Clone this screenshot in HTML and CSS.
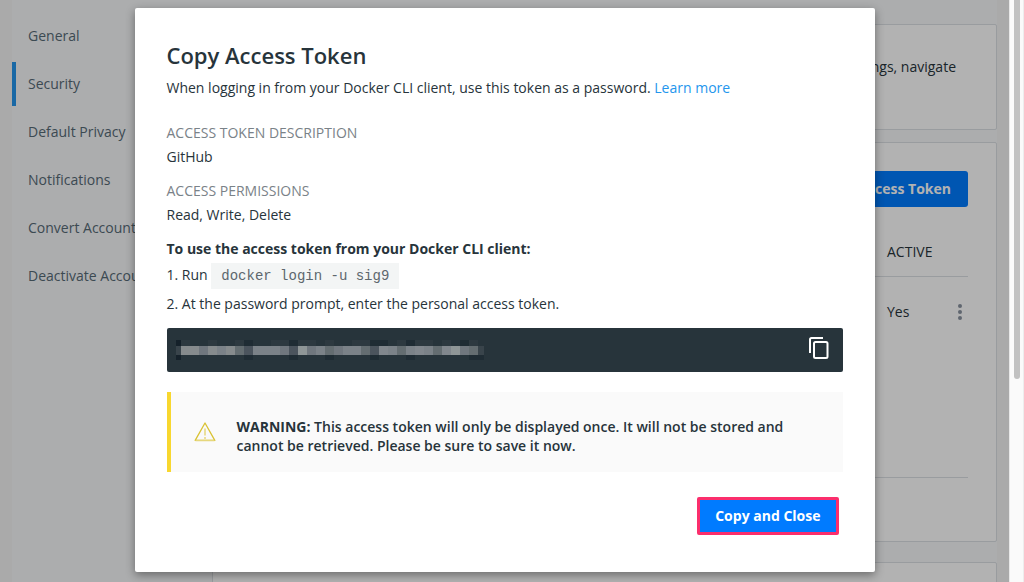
FILE: index.html
```html
<!DOCTYPE html>
<html lang="en">
<head>
<meta charset="utf-8">
<title>Copy Access Token</title>
<link rel="stylesheet" href="styles.css">
</head>
<body>
<div class="app">
  <div class="page">
    <nav class="sidebar">
      <a class="nav-item" href="#">General</a>
      <a class="nav-item active" href="#">Security</a>
      <a class="nav-item" href="#">Default Privacy</a>
      <a class="nav-item" href="#">Notifications</a>
      <a class="nav-item" href="#">Convert Account</a>
      <a class="nav-item" href="#">Deactivate Account</a>
    </nav>
    <main class="content">
      <section class="card card-intro"><p>settings, navigate</p></section>
      <section class="card card-tokens">
        <button class="btn new-token" type="button">New Access Token</button>
        <table class="tokens">
          <thead><tr><th></th><th class="col-active">ACTIVE</th></tr></thead>
          <tbody><tr><td></td><td class="col-active"><div class="row-end">Yes
            <button class="more" type="button" aria-label="More">
              <svg width="6" height="16" viewBox="0 0 6 16"><circle cx="3" cy="2" r="2"/><circle cx="3" cy="8" r="2"/><circle cx="3" cy="14" r="2"/></svg>
            </button></div></td></tr></tbody>
        </table>
      </section>
      <section class="card card-next"></section>
    </main>
  </div>
  <div class="overlay">
    <div class="modal" role="dialog" aria-labelledby="title">
      <h1 id="title">Copy Access Token</h1>
      <p class="intro">When logging in from your Docker CLI client, use this token as a password. <a href="#">Learn more</a></p>
      <dl class="details">
        <dt>ACCESS TOKEN DESCRIPTION</dt>
        <dd>GitHub</dd>
        <dt>ACCESS PERMISSIONS</dt>
        <dd>Read, Write, Delete</dd>
      </dl>
      <h2>To use the access token from your Docker CLI client:</h2>
      <p class="step">1. Run <code>docker login -u sig9</code></p>
      <p class="step">2. At the password prompt, enter the personal access token.</p>
      <div class="token">
        <svg class="mosaic" width="310" height="20" viewBox="0 0 310 20" shape-rendering="crispEdges" aria-hidden="true">
          <path fill="#15212a" d="M0 0h5v6H0zM0 15h5v5H0z"/>
          <path fill="#2d3940" d="M5 0h9v6H5zM32 0h9v6h-9zM59 0h9v6h-9zM95 0h18v6H95zM122 0h18v6h-18zM149 0h9v6h-9zM176 0h18v6h-18zM221 0h9v6h-9zM239 0h18v6h-18zM266 0h9v6h-9zM293 0h9v6h-9z"/>
          <path fill="#1f2c34" d="M68 0h9v6h-9zM113 0h9v6h-9zM194 0h18v6h-18zM230 0h9v6h-9zM284 0h9v6h-9zM68 15h9v5h-9zM113 15h9v5h-9zM149 15h9v5h-9zM194 15h9v5h-9zM230 15h9v5h-9zM293 15h15v5h-15z"/>
          <path fill="#39444b" d="M0 6h5v9H0zM302 6h6v9h-6z"/>
          <path fill="#868b8d" d="M5 6h18v9H5zM32 6h9v9h-9zM50 6h9v9h-9z"/>
          <path fill="#70777e" d="M23 6h9v9h-9zM104 6h9v9h-9zM131 6h9v9h-9zM158 6h9v9h-9zM284 6h9v9h-9z"/>
          <path fill="#7b8288" d="M41 6h9v9h-9zM77 6h27v9H77zM140 6h9v9h-9zM167 6h18v9h-18zM212 6h9v9h-9zM230 6h9v9h-9zM248 6h9v9h-9z"/>
          <path fill="#646d71" d="M59 6h9v9h-9zM149 6h9v9h-9zM185 6h9v9h-9zM221 6h9v9h-9zM257 6h9v9h-9zM293 6h9v9h-9z"/>
          <path fill="#4b545d" d="M68 6h9v9h-9zM113 6h9v9h-9zM194 6h9v9h-9z"/>
          <path fill="#81878d" d="M203 6h9v9h-9zM239 6h9v9h-9zM266 6h9v9h-9z"/>
          <path fill="#8f9697" d="M122 6h9v9h-9zM275 6h9v9h-9z"/>
        </svg>
        <button class="copy" type="button" aria-label="Copy">
          <svg width="20" height="22" viewBox="0 0 20 22" fill="none" stroke="#fff" stroke-width="2"><path d="M14 1H2.500Q1 1 1 2.500V16"/><rect x="5" y="5" width="13.500" height="16" rx="1.500"/></svg>
        </button>
      </div>
      <div class="warning">
        <svg width="22" height="20" viewBox="0 0 22 20" fill="none" stroke="#d9c233" stroke-linejoin="round"><path stroke-width="1.300" d="M11 1 1.200 18.400H20.800Z"/><path stroke="#e6d77c" stroke-width="1.500" d="M1.500 18.500h19M11 6.500v7M11 15v2"/></svg>
        <p><strong>WARNING:</strong> This access token will only be displayed once. It will not be stored and cannot be retrieved. Please be sure to save it now.</p>
      </div>
      <div class="actions"><button class="btn close" type="button">Copy and Close</button></div>
    </div>
  </div>
</div>
<div class="scrollbar"><div class="thumb"></div></div>
</body>
</html>
```
FILE: styles.css
```css
* { box-sizing: border-box; }
body, h1, h2, p, dl, dd { margin: 0; }
body {
  display: flex;
  height: 100vh;
  overflow: hidden;
  font: 14px/24px "Open Sans", sans-serif;
  color: #27343b;
}
button { font: inherit; padding: 0; border: 0; background: none; }
svg { display: block; }
a { color: #2496ed; text-decoration: none; }

.app { position: relative; flex: 1; min-width: 0; overflow: hidden; background: #f4f4f4; }
.page { display: flex; min-height: 100vh; margin: 0 12px; background: #f6f8fa; }
.sidebar { display: flex; flex-direction: column; gap: 4px; flex: 0 0 200px; padding-top: 14px; }
.nav-item { padding: 10px 12px; border-left: 4px solid transparent; color: #566a76; white-space: nowrap; }
.nav-item.active { border-color: #2496ed; }
.content { flex: 1; padding-top: 24px; }
.card { border: 1px solid #dbe0e4; border-radius: 2px; background: #fff; padding: 28px; }
.card-intro { height: 106px; margin-bottom: 12px; padding: 30px 40px; text-align: right; }
.card-tokens { height: 400px; margin-bottom: 20px; }
.card-next { height: 100px; }
.btn { border-radius: 3px; background: #007bff; color: #fff; font-weight: 700; }
.new-token { display: block; height: 36px; margin-left: auto; padding: 0 17px; }
.tokens { width: 100%; margin-top: 21px; border-collapse: collapse; }
.tokens th { height: 48px; padding: 1px 0 0; border-bottom: 1px solid #dbe0e4; font-weight: 400; text-align: left; }
.tokens td { height: 201px; padding: 23px 0; border-bottom: 1px solid #dbe0e4; vertical-align: top; }
.tokens .col-active { width: 81px; }
.row-end { display: flex; justify-content: space-between; align-items: center; }
.more { padding: 0 5px; }
.more svg { fill: #8993a0; }

.overlay { position: absolute; inset: 0; display: flex; justify-content: center; align-items: flex-start; padding: 8px; background: rgba(0, 0, 0, .3); }
.modal { width: 740px; max-width: 100%; padding: 32px 32px 37px; border-radius: 2px; background: #fff; box-shadow: 0 3px 10px rgba(0, 0, 0, .4); }
h1 { font-size: 22px; line-height: 30px; font-weight: 600; }
.intro { margin: 6px 0 21px; }
.details dt { color: #7a8288; }
.details dd { margin-bottom: 10px; }
h2 { font-size: 14px; line-height: 24px; font-weight: 700; margin-bottom: 2px; }
.step { margin-bottom: 3px; }
code { display: inline-block; padding: 1px 10px; background: #f3f5f5; color: #5d676d; font: 14px/24px "Liberation Mono", monospace; }
.token { display: flex; align-items: center; justify-content: space-between; height: 44px; margin-top: 12px; padding: 0 14px 0 9px; border-radius: 2px; background: #27343b; }
.copy { margin-bottom: 4px; }
.warning { display: flex; align-items: center; gap: 21px; min-height: 80px; margin-top: 20px; padding: 0 48px 0 23px; border-left: 4px solid #f8d72f; background: #fafafa; }
.warning svg { flex: none; }
.warning p { padding-top: 8px; line-height: 19px; font-weight: 600; }
.warning strong { font-weight: 700; }
.actions { display: flex; justify-content: flex-end; margin-top: 25px; padding-right: 4px; }
.close { height: 38px; padding: 0 15px; border: 3px solid #fb2e6c; border-radius: 2px; }

.scrollbar { flex: 0 0 15px; padding: 0 3px 0 4px; border-left: 1px solid #e8e8e8; border-right: 1px solid #ededed; background: #fafafa; }
.thumb { height: 379px; border-radius: 0 0 4px 4px; background: #c1c1c1; }
```
